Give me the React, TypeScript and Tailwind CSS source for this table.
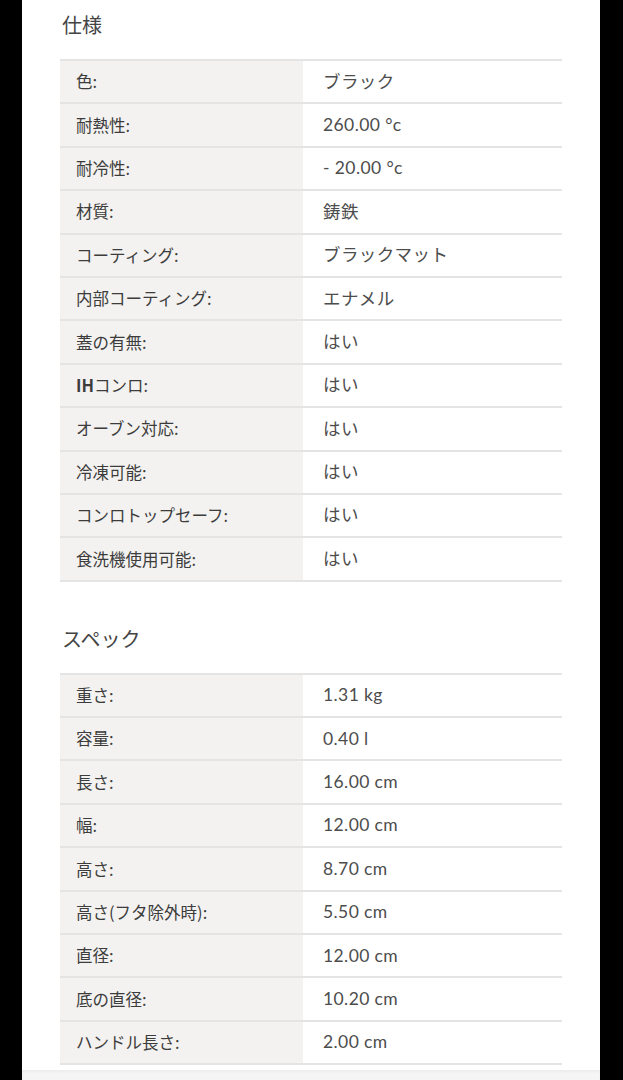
const specs: [string, string][] = [
  ['色:', 'ブラック'],
  ['耐熱性:', '260.00 °c'],
  ['耐冷性:', '- 20.00 °c'],
  ['材質:', '鋳鉄'],
  ['コーティング:', 'ブラックマット'],
  ['内部コーティング:', 'エナメル'],
  ['蓋の有無:', 'はい'],
  ['IHコンロ:', 'はい'],
  ['オーブン対応:', 'はい'],
  ['冷凍可能:', 'はい'],
  ['コンロトップセーフ:', 'はい'],
  ['食洗機使用可能:', 'はい'],
];

const dims: [string, string][] = [
  ['重さ:', '1.31 kg'],
  ['容量:', '0.40 l'],
  ['長さ:', '16.00 cm'],
  ['幅:', '12.00 cm'],
  ['高さ:', '8.70 cm'],
  ['高さ(フタ除外時):', '5.50 cm'],
  ['直径:', '12.00 cm'],
  ['底の直径:', '10.20 cm'],
  ['ハンドル長さ:', '2.00 cm'],
];

function Label({ text }: { text: string }) {
  // "IH" is set bold in the original
  if (text.startsWith('IH')) {
    return (
      <>
        <span className="font-bold">IH</span>
        {text.slice(2)}
      </>
    );
  }
  return <>{text}</>;
}

function SpecTable({ rows }: { rows: [string, string][] }) {
  return (
    <div className="border-b-2 border-[#e4e4e4]">
      {rows.map(([label, value]) => (
        <div key={label} className="grid grid-cols-[243px_1fr] h-[43.4px] border-t-2 border-[#e4e4e4]">
          <div className="bg-[#f3f2f0] pl-4 flex items-center text-[16.5px] font-normal text-[#3c3c3c] [font-family:'Noto_Sans_CJK_JP',sans-serif]">
            <Label text={label} />
          </div>
          <div className="pl-5 flex items-center text-[17.5px] tracking-[0.4px] text-[#4d4d4d] [font-family:Lato,'Noto_Sans_CJK_JP',sans-serif]">
            {value}
          </div>
        </div>
      ))}
    </div>
  );
}

export default function App() {
  return (
    <div className="flex min-h-[1080px] bg-black">
      <div className="w-[22px] shrink-0 bg-black" />
      <div className="flex-1 bg-white flex flex-col">
        <div className="px-[38px] pt-[11px] flex-1">
          <h2 className="text-[20px] leading-[28px] text-[#444] [font-family:'Noto_Sans_CJK_JP',sans-serif] pl-[2px]">仕様</h2>
          <div className="mt-[20px]">
            <SpecTable rows={specs} />
          </div>
          <h2 className="mt-[43px] text-[20px] leading-[28px] text-[#444] [font-family:'Noto_Sans_CJK_JP',sans-serif] pl-[2px]">スペック</h2>
          <div className="mt-[20px]">
            <SpecTable rows={dims} />
          </div>
        </div>
        <div className="h-[10px] bg-[#f5f5f5] shadow-[inset_0_2px_3px_rgba(0,0,0,0.04)]" />
      </div>
      <div className="w-[23px] shrink-0 bg-black" />
    </div>
  );
}
